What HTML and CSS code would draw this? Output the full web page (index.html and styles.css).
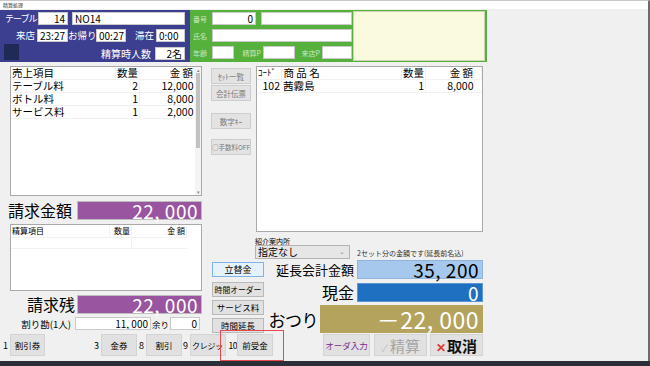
FILE: index.html
```html
<!DOCTYPE html>
<html lang="ja">
<head>
    <meta charset="UTF-8">
    <meta name="viewport" content="width=device-width, initial-scale=1.0">
    <title>精算処理</title>
    <link rel="stylesheet" href="styles.css">
</head>
<body>
<div class="window">
    <div class="titlebar">精算処理</div>

    <!-- Header: table info + customer info -->
    <div class="header">
        <div class="table-panel">
            <div class="trow row1">
                <span class="tlabel w33 tight">テーブル</span>
                <span class="field num w30">14</span>
                <span class="field w113 ml4">NO14</span>
            </div>
            <div class="trow row2">
                <span class="tlabel w32 right">来店</span>
                <span class="field w31">23:27</span>
                <span class="tlabel w28">お帰り</span>
                <span class="field w30">00:27</span>
                <span class="tlabel w30 right">滞在</span>
                <span class="field w29">0:00</span>
            </div>
            <div class="trow row3">
                <span class="navy-box"></span>
                <span class="tlabel grow right">精算時人数</span>
                <span class="field num w30 ml2">2名</span>
            </div>
        </div>
        <div class="guest-panel">
            <div class="guest-form">
                <div class="grow-row">
                    <span class="glabel w19">番号</span>
                    <span class="field num w44">0</span>
                    <span class="field w91 ml5"></span>
                </div>
                <div class="grow-row gr2">
                    <span class="glabel w19">氏名</span>
                    <span class="field w140"></span>
                </div>
                <div class="grow-row gr3">
                    <span class="glabel w19">年齢</span>
                    <span class="field w22"></span>
                    <span class="glabel w29 right">精算P</span>
                    <span class="field w32"></span>
                    <span class="glabel w27 right">来店P</span>
                    <span class="field w30"></span>
                </div>
            </div>
            <div class="memo"></div>
        </div>
    </div>

    <div class="main">
        <!-- Left column -->
        <div class="left-col">
            <div class="list sales-list">
                <table class="grid">
                    <tr class="head"><td class="c-item">売上項目</td><td class="c-qty">数量</td><td class="c-amt">金 額</td></tr>
                    <tr><td>テーブル料</td><td class="c-qty">2</td><td class="c-amt">12,000</td></tr>
                    <tr><td>ボトル料</td><td class="c-qty">1</td><td class="c-amt">8,000</td></tr>
                    <tr><td>サービス料</td><td class="c-qty">1</td><td class="c-amt">2,000</td></tr>
                </table>
                <div class="scrollbar">
                    <span class="arrow">▴</span>
                    <span class="thumb"></span>
                    <span class="arrow bottom">▾</span>
                </div>
            </div>

            <div class="total-row billed">
                <span class="big-label">請求金額</span>
                <span class="amount purple">22, 000</span>
            </div>

            <div class="list settle-list">
                <table class="grid small">
                    <tr class="head"><td class="c-item">精算項目</td><td class="c-qty">数量</td><td class="c-amt">金 額</td></tr>
                    <tr><td></td><td class="c-qty"></td><td class="c-amt"></td></tr>
                </table>
            </div>

            <div class="total-row remain">
                <span class="big-label right">請求残</span>
                <span class="amount purple">22, 000</span>
            </div>

            <div class="split-row">
                <span class="split-label">割り勘(1人)</span>
                <span class="field num w76">11, 000</span>
                <span class="split-rest">余り</span>
                <span class="field num w30">0</span>
            </div>
        </div>

        <!-- Middle + right column -->
        <div class="right-col">
            <div class="top-area">
                <div class="side-buttons">
                    <button class="mini b1">ｾｯﾄ一覧</button>
                    <button class="mini b2">会計伝票</button>
                    <button class="mini b3">数字ｷｰ</button>
                    <button class="mini b4">○手数料OFF</button>
                </div>
                <div class="list order-list">
                    <table class="grid">
                        <tr class="head"><td class="c-code">ｺｰﾄﾞ</td><td class="c-name">商 品 名</td><td class="c-oqty">数量</td><td class="c-oamt">金 額</td></tr>
                        <tr><td class="c-code">102</td><td class="c-name">茜霧島</td><td class="c-oqty">1</td><td class="c-oamt">8,000</td></tr>
                    </table>
                </div>
            </div>

            <div class="guide-row">
                <div class="guide">
                    <div class="guide-label">紹介案内所</div>
                    <div class="select">指定なし<span class="caret">⌄</span></div>
                </div>
                <div class="note">2セット分の金額です(延長前名込)</div>
            </div>

            <div class="pay-area">
                <div class="pay-buttons">
                    <button class="pay-btn active p1">立替金</button>
                    <button class="pay-btn p2">時間オーダー</button>
                    <button class="pay-btn p3">サービス料</button>
                    <button class="pay-btn p4">時間延長</button>
                </div>
                <div class="pay-amounts">
                    <div class="pay-row r1">
                        <span class="pay-label">延長会計金額</span>
                        <span class="amount light-blue">35, 200</span>
                    </div>
                    <div class="pay-row r2">
                        <span class="pay-label cash">現金</span>
                        <span class="amount blue">0</span>
                    </div>
                    <div class="pay-row r3">
                        <span class="pay-label change">おつり</span>
                        <span class="amount gold">－22, 000</span>
                    </div>
                </div>
            </div>
        </div>
    </div>

    <!-- Bottom buttons -->
    <div class="bottom-bar">
        <span class="key k1">1</span><button class="btn w35">割引券</button>
        <span class="key k3">3</span><button class="btn w36">金券</button>
        <span class="key k8">8</span><button class="btn w36">割引</button>
        <span class="key k9">9</span><button class="btn w36 clip">クレジット</button>
        <span class="key k10">10</span><button class="btn w36">前受金</button>
        <button class="btn action order">オーダ入力</button>
        <button class="btn action settle"><span class="check">✓</span>精算</button>
        <button class="btn action cancel"><span class="cross">✕</span>取消</button>
    </div>

    <div class="highlight"></div>
</div>
</body>
</html>
```

FILE: styles.css
```css
/* Global */
* {
    box-sizing: border-box;
}

body {
    margin: 0;
    width: 650px;
    height: 366px;
    overflow: hidden;
    background: #2a2f38;
    font-family: "Noto Sans CJK JP", "Noto Sans", sans-serif;
    font-size: 11px;
    color: #000;
}

.window {
    position: relative;
    width: 650px;
    height: 361px;
    background: #f0f0f0;
    border-top: 1px solid #c8c8c8;
    border-right: 2px solid #6c6c6c;
}

.titlebar {
    height: 8px;
    background: #fff;
    font-size: 5px;
    line-height: 8px;
    padding-left: 3px;
    color: #333;
}

/* Generic fields */
.field {
    display: inline-block;
    flex-shrink: 0;
    height: 13px;
    background: #fff;
    border: 1px solid #c9c9c9;
    font-size: 10px;
    line-height: 11px;
    padding: 0 2px;
    color: #000;
    white-space: nowrap;
    overflow: hidden;
}

.field.num {
    text-align: right;
}

.right {
    text-align: right;
}

.grow {
    flex: 1;
}

.w19 { width: 19px; }
.w22 { width: 22px; }
.w27 { width: 27px; }
.w28 { width: 28px; }
.w29 { width: 29px; }
.w30 { width: 30px; }
.w31 { width: 31px; }
.w32 { width: 32px; }
.w33 { width: 33px; }
.w35 { width: 35px; }
.w36 { width: 36px; }
.w44 { width: 44px; }
.w76 { width: 76px; }
.w91 { width: 91px; }
.w113 { width: 113px; }
.w140 { width: 140px; }
.ml2 { margin-left: 2px; }
.ml4 { margin-left: 4px; }
.ml5 { margin-left: 5px; }

/* Header */
.header {
    display: flex;
    margin-top: 1px;
    height: 52px;
}

.table-panel {
    width: 190px;
    background: #3c3f8f;
    padding: 2px 5px 0 5px;
    color: #fff;
}

.trow {
    display: flex;
    align-items: center;
    height: 13px;
}

.row2 {
    margin-top: 4px;
}

.row3 {
    margin-top: 2px;
    height: 16px;
    align-items: flex-end;
}

.tlabel {
    display: inline-block;
    flex-shrink: 0;
    font-size: 9.5px;
    line-height: 13px;
    padding-right: 2px;
    white-space: nowrap;
}

.tlabel.tight {
    font-size: 9px;
    letter-spacing: -1px;
    padding-right: 0;
}

.row3 .tlabel {
    flex: 1;
    font-size: 10px;
}

.navy-box {
    width: 15px;
    height: 16px;
    margin-left: -1px;
    background: #1f2a56;
}

.guest-panel {
    display: flex;
    width: 297px;
    background: #56b03c;
    padding: 1px 2px 1px 3px;
}

.guest-form {
    width: 160px;
    padding-top: 1px;
}

.grow-row {
    display: flex;
    align-items: center;
    height: 13px;
}

.gr2 {
    margin-top: 4px;
}

.gr3 {
    margin-top: 4px;
}

.glabel {
    display: inline-block;
    font-size: 7px;
    color: #cfe8c2;
    padding-right: 2px;
    white-space: nowrap;
}

.memo {
    flex: 1;
    background: #fafade;
    border: 1px solid #cfd2b5;
}

/* Main area */
.main {
    display: flex;
    padding-left: 10px;
    margin-top: 4px;
    height: 267px;
}

.left-col {
    width: 192px;
}

.list {
    background: #fff;
    border: 1px solid #a9a9a9;
}

.sales-list {
    display: flex;
    height: 130px;
}

.grid {
    border-collapse: collapse;
    flex: 1;
    align-self: flex-start;
    font-size: 10.5px;
}

.grid td {
    height: 12px;
    line-height: 12px;
    padding: 0 1px;
    border-bottom: 1px solid #f1f1f1;
    white-space: nowrap;
}

.grid .head td {
    border-right: 1px solid #f1f1f1;
}

.grid .c-qty {
    width: 22px;
    text-align: right;
    border-right: 1px solid #f1f1f1;
}

.grid .c-amt {
    width: 55px;
    text-align: right;
}

.grid.small {
    width: 100%;
    font-size: 8px;
}

.grid.small td {
    height: 11px;
}

.scrollbar {
    width: 6px;
    background: #f4f4f4;
    display: flex;
    flex-direction: column;
    align-items: center;
}

.scrollbar .arrow {
    font-size: 5px;
    line-height: 6px;
    color: #888;
}

.scrollbar .thumb {
    width: 4px;
    height: 75px;
    background: #c2c2c2;
}

.scrollbar .arrow.bottom {
    margin-top: auto;
}

.total-row {
    display: flex;
    align-items: center;
    height: 19px;
}

.billed {
    margin-top: 5px;
}

.remain {
    margin-top: 4px;
}

.big-label {
    width: 67px;
    flex-shrink: 0;
    margin-left: -2px;
    margin-right: 2px;
    font-size: 16px;
    line-height: 19px;
    white-space: nowrap;
}

.amount {
    display: inline-block;
    flex-shrink: 0;
    height: 19px;
    text-align: right;
    padding-right: 3px;
    font-size: 19px;
    line-height: 18px;
    letter-spacing: 0.5px;
    border: 1px solid #bdbdbd;
    white-space: nowrap;
}

.purple {
    width: 125px;
    background: #9a55a0;
    color: #fff;
}

.settle-list {
    height: 67px;
    margin-top: 4px;
    padding-right: 14px;
}

.split-row {
    display: flex;
    align-items: center;
    margin-top: 3px;
    height: 13px;
}

.split-label {
    width: 67px;
    flex-shrink: 0;
    font-size: 9.5px;
    text-align: right;
    padding-right: 4px;
    margin-left: -2px;
    white-space: nowrap;
}

.split-rest {
    width: 19px;
    flex-shrink: 0;
    font-size: 8.5px;
    text-align: center;
    white-space: nowrap;
}

/* Right column */
.right-col {
    width: 272px;
    margin-left: 9px;
}

.top-area {
    display: flex;
    height: 166px;
}

.side-buttons {
    width: 40px;
    display: flex;
    flex-direction: column;
}

.mini {
    height: 16px;
    padding: 0;
    font-family: inherit;
    font-size: 7.5px;
    color: #7a7a7a;
    background: #e3e3e3;
    border: 1px solid #cdcdcd;
    white-space: nowrap;
    overflow: hidden;
}

.b1 { margin-top: 2px; }
.b2 { margin-top: 1px; }
.b3 { margin-top: 12px; }
.b4 { margin-top: 10px; font-size: 6.5px; }

.order-list {
    width: 227px;
    margin-left: 5px;
}

.order-list .grid {
    width: 100%;
}

.grid .c-code {
    width: 24px;
    text-align: right;
}

.grid .head .c-code {
    text-align: left;
    font-size: 9px;
}

.grid .c-name {
    text-align: left;
    padding-left: 2px;
}

.grid .c-oqty {
    width: 24px;
    text-align: right;
    border-right: 1px solid #f1f1f1;
}

.grid .c-oamt {
    width: 56px;
    text-align: right;
    padding-right: 8px;
}

.guide-row {
    display: flex;
    align-items: flex-end;
    height: 27px;
    padding-top: 5px;
}

.guide {
    margin-left: 44px;
    width: 95px;
}

.guide-label {
    font-size: 7px;
    line-height: 8px;
}

.select {
    position: relative;
    height: 14px;
    background: #e6e6e6;
    border: 1px solid #b3b3b3;
    font-size: 10px;
    line-height: 12px;
    padding-left: 2px;
}

.caret {
    position: absolute;
    right: 4px;
    top: -1px;
    font-size: 7px;
    color: #888;
}

.note {
    margin-left: 7px;
    margin-bottom: 2px;
    font-size: 7px;
    line-height: 7px;
    color: #333;
    white-space: nowrap;
}

.pay-area {
    display: flex;
    height: 74px;
}

.pay-buttons {
    width: 52px;
    flex-shrink: 0;
    margin-left: 1px;
    display: flex;
    flex-direction: column;
}

.pay-btn {
    height: 15px;
    padding: 0;
    font-family: inherit;
    font-size: 8.5px;
    line-height: 11px;
    background: #e1e1e1;
    border: 1px solid #b9b9b9;
    white-space: nowrap;
    overflow: hidden;
}

.pay-btn.active {
    background: #e5f1fb;
    border-color: #7eb4ea;
    font-size: 9px;
}

.p1 { margin-top: 3px; }
.p2 { margin-top: 5px; font-size: 7.8px; }
.p3 { margin-top: 3px; height: 16px; }
.p4 { margin-top: 3px; height: 15px; }

.pay-amounts {
    width: 220px;
    padding-top: 1px;
}

.pay-row {
    display: flex;
    justify-content: flex-end;
    align-items: center;
}

.r2 { margin-top: 4px; }
.r3 { margin-top: 3px; }

.pay-label {
    font-size: 13px;
    line-height: 19px;
    margin-right: 3px;
    white-space: nowrap;
}

.pay-label.cash {
    font-size: 16px;
}

.pay-label.change {
    font-size: 17px;
    letter-spacing: -0.5px;
    margin-right: 2px;
}

.light-blue {
    width: 126px;
    background: #a6c8ec;
    border-color: #8fb4dc;
    color: #000;
}

.blue {
    width: 126px;
    background: #1f70c1;
    border-color: #5b96d2;
    color: #fff;
}

.gold {
    width: 163px;
    height: 28px;
    line-height: 27px;
    font-size: 23px;
    background: #b4a35d;
    border-color: #b4a35d;
    color: #fff;
}

/* Bottom bar */
.bottom-bar {
    display: flex;
    align-items: center;
    height: 22px;
    margin-top: 1px;
    padding-left: 3px;
    font-size: 9px;
}

.key {
    display: inline-block;
    flex-shrink: 0;
    text-align: right;
    padding-right: 2px;
    font-size: 9px;
}

.k1 { width: 7px; text-align: left; }
.k3 { width: 56px; }
.k8 { width: 9px; }
.k9 { width: 8px; }
.k10 { width: 11px; padding-right: 0; font-size: 8.5px; letter-spacing: -0.5px; }

.btn {
    height: 22px;
    flex-shrink: 0;
    padding: 0;
    font-family: inherit;
    font-size: 8.5px;
    background: #e1e1e1;
    border: 1px solid #d3d3d3;
    white-space: nowrap;
    overflow: hidden;
}

.btn.clip {
    text-align: left;
    padding-left: 1px;
    font-size: 8px;
    letter-spacing: -0.3px;
}

.action {
    font-size: 15px;
}

.order {
    width: 47px;
    margin-left: 50px;
    font-size: 8.5px;
    color: #7b2a8c;
}

.settle {
    width: 53px;
    margin-left: 4px;
    color: #a6a6a6;
}

.check {
    font-size: 10px;
    color: #c4c4c4;
    margin-right: 2px;
}

.cancel {
    width: 53px;
    margin-left: 3px;
    font-weight: bold;
    color: #111;
}

.cross {
    color: #e03a2f;
    font-size: 12px;
    margin-right: 1px;
}

/* Red focus marker drawn over the bottom bar */
.highlight {
    position: absolute;
    left: 220px;
    top: 329px;
    width: 64px;
    height: 31px;
    border: 1.5px solid #e5484d;
}
```
